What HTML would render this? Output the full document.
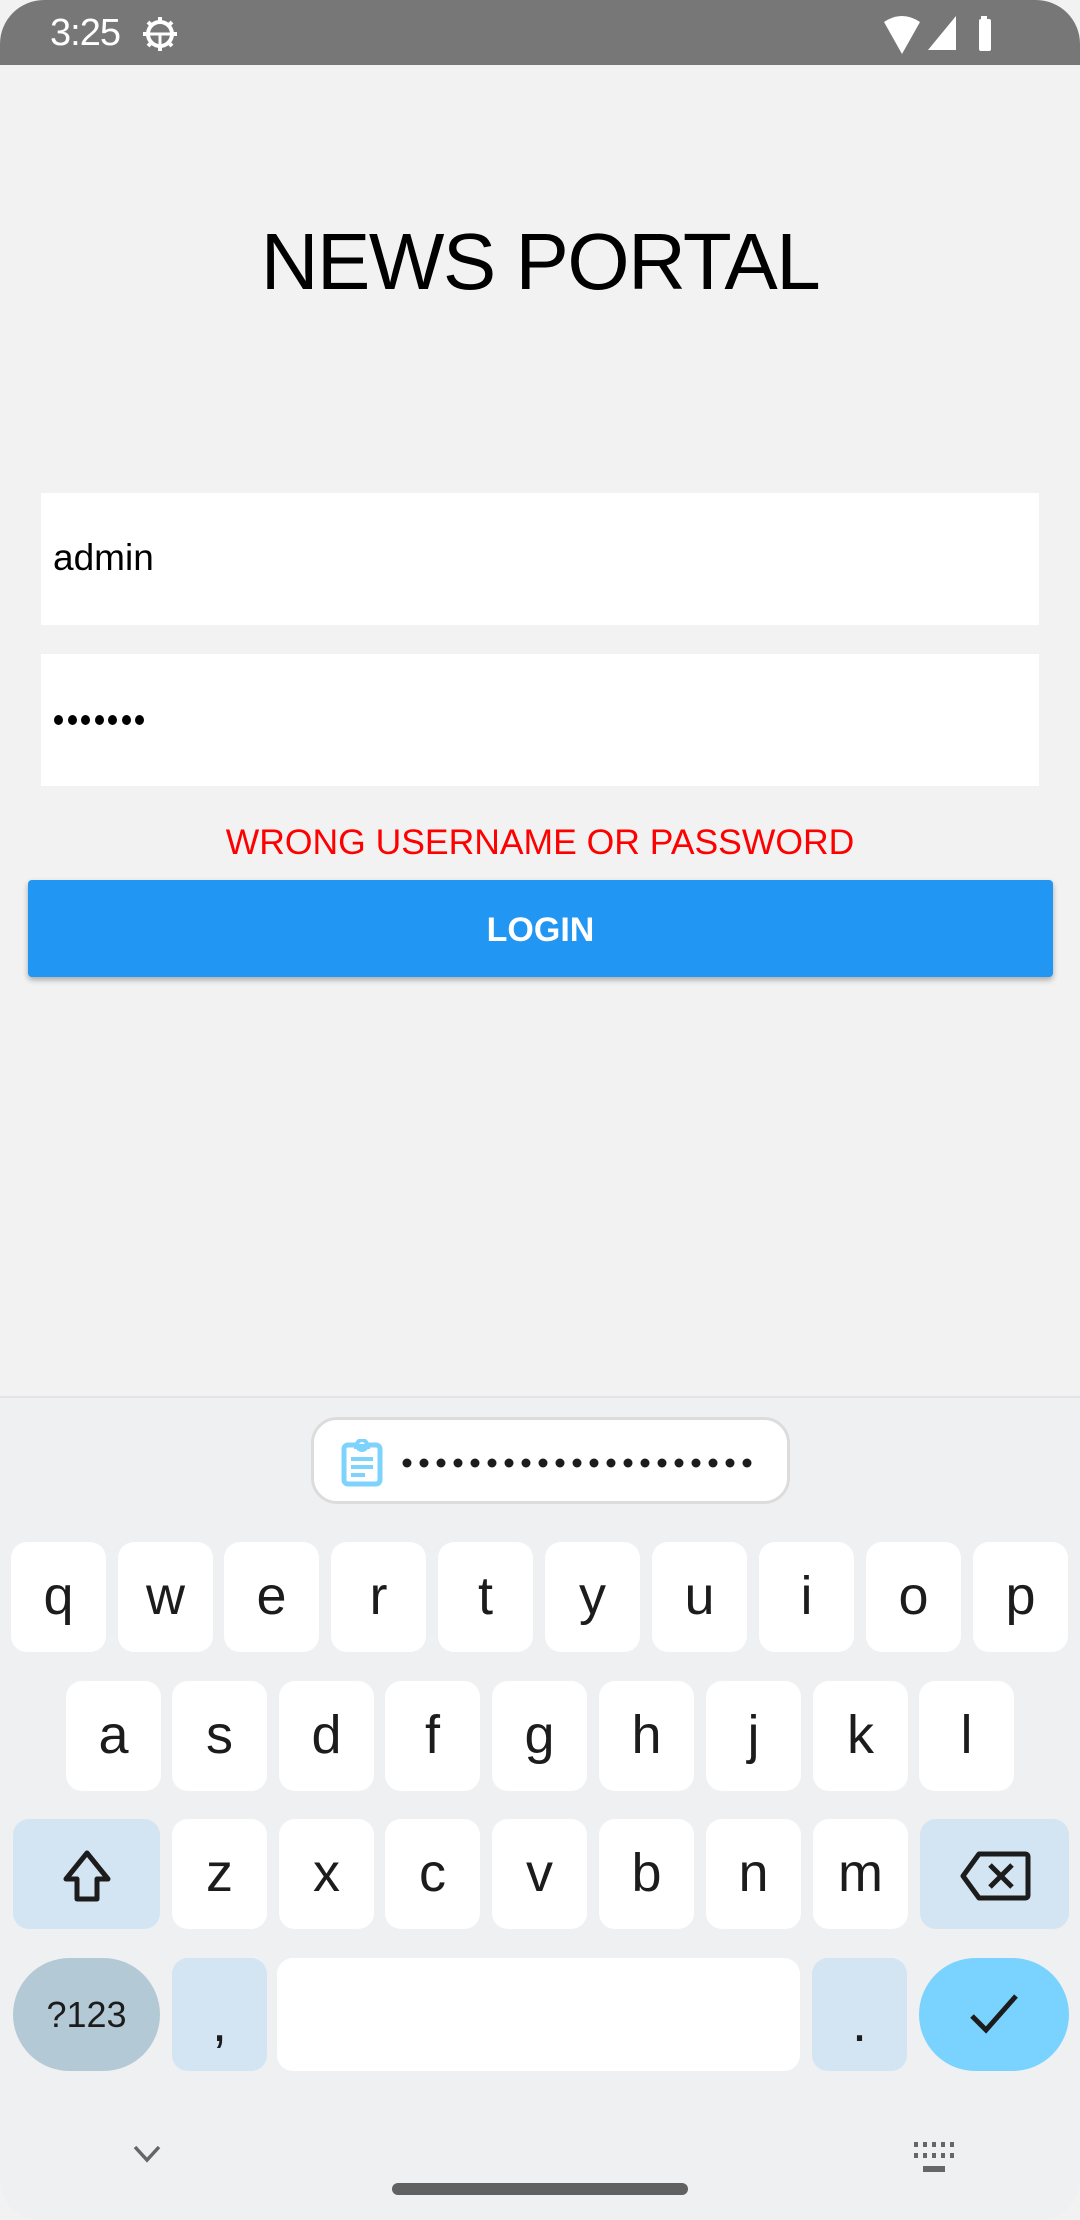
<!DOCTYPE html>
<html><head><meta charset="utf-8">
<style>
*{margin:0;padding:0;box-sizing:border-box}
body{width:1080px;height:2220px;background:#f2f2f2;font-family:"Liberation Sans",sans-serif;position:relative;overflow:hidden}
.a{position:absolute}
.sb{left:0;top:0;width:1080px;height:65px;background:#777;border-radius:44px 44px 0 0;color:#fff}
.in{background:#fff;left:41px;width:998px;height:132px}
.kb{left:0;top:1396px;width:1080px;height:824px;background:#eff0f2;border-top:2px solid #e4e4e6;border-radius:0 0 40px 40px}
.k{position:absolute;background:#fff;border-radius:16px;width:95px;height:110px;font-size:54px;color:#1c1c1c;text-align:center;line-height:108px}
.m{background:#d3e4f3}
.d{display:inline-block;border-radius:50%;background:#000}
</style></head><body>
<div class="a sb">
  <div class="a" style="left:50px;top:12px;font-size:38px;letter-spacing:-1px">3:25</div>
  <svg class="a" style="left:140px;top:14px" width="40" height="40" viewBox="0 0 40 40"><circle cx="20" cy="20" r="12" fill="none" stroke="#fff" stroke-width="4"/><g stroke="#fff" stroke-width="4"><line x1="20" y1="3" x2="20" y2="9"/><line x1="20" y1="31" x2="20" y2="37"/><line x1="3" y1="20" x2="9" y2="20"/><line x1="31" y1="20" x2="37" y2="20"/><line x1="8" y1="8" x2="12" y2="12"/><line x1="28" y1="28" x2="32" y2="32"/><line x1="8" y1="32" x2="12" y2="28"/><line x1="28" y1="12" x2="32" y2="8"/></g><line x1="9" y1="20" x2="31" y2="20" stroke="#fff" stroke-width="3"/><line x1="20" y1="20" x2="20" y2="32" stroke="#fff" stroke-width="3"/></svg>
  <svg class="a" style="left:880px;top:14px" width="130" height="40" viewBox="0 0 130 40"><path d="M4 8 Q22 -4 40 8 L22 40 Z" fill="#fff"/><path d="M48 36 L76 2 L76 36 Z" fill="#fff"/><rect x="101" y="2" width="6" height="4" fill="#fff"/><rect x="99" y="5" width="12" height="32" rx="2" fill="#fff"/></svg>
</div>
<div class="a" style="left:0;width:1080px;top:216px;text-align:center;font-size:80px;color:#000;letter-spacing:-1.5px">NEWS PORTAL</div>
<div class="a in" style="top:493px"><div class="a" style="left:12px;top:44px;font-size:37px;color:#000">admin</div></div>
<div class="a in" style="top:654px"><div class="a" style="left:13px;top:61px;height:10px;line-height:0;font-size:0"><span class="d" style="width:9px;height:10px;margin-right:4.5px"></span><span class="d" style="width:9px;height:10px;margin-right:4.5px"></span><span class="d" style="width:9px;height:10px;margin-right:4.5px"></span><span class="d" style="width:9px;height:10px;margin-right:4.5px"></span><span class="d" style="width:9px;height:10px;margin-right:4.5px"></span><span class="d" style="width:9px;height:10px;margin-right:4.5px"></span><span class="d" style="width:9px;height:10px"></span></div></div>
<div class="a" style="left:0;width:1080px;top:822px;text-align:center;font-size:35.5px;color:#f00">WRONG USERNAME OR PASSWORD</div>
<div class="a" style="left:28px;top:880px;width:1025px;height:97px;background:#2196f3;border-radius:4px;box-shadow:0 3px 6px rgba(0,0,0,.3);color:#fff;font-size:34px;font-weight:bold;text-align:center;line-height:100px">LOGIN</div>

<div class="a kb">
 <div class="a" style="left:311px;top:19px;width:479px;height:87px;background:#fff;border:3px solid #dcdcdc;border-radius:26px">
  <svg class="a" style="left:27px;top:19px" width="42" height="48" viewBox="0 0 42 48"><rect x="3" y="6" width="36" height="39" rx="4" fill="none" stroke="#7dd3fc" stroke-width="5"/><circle cx="21" cy="6" r="5" fill="#fff" stroke="#7dd3fc" stroke-width="4"/><rect x="13" y="5" width="16" height="5" fill="#7dd3fc"/><rect x="10" y="18" width="22" height="4" fill="#7dd3fc"/><rect x="10" y="26" width="22" height="4" fill="#7dd3fc"/><rect x="10" y="34" width="14" height="4" fill="#7dd3fc"/></svg>
  <svg class="a" style="left:88px;top:37px" width="360" height="14" viewBox="0 0 360 14"><g fill="#1c1c1c">
   <circle cx="5" cy="6" r="4.5"/><circle cx="22" cy="6" r="4.5"/><circle cx="39" cy="6" r="4.5"/><circle cx="56" cy="6" r="4.5"/><circle cx="73" cy="6" r="4.5"/><circle cx="90" cy="6" r="4.5"/><circle cx="107" cy="6" r="4.5"/><circle cx="124" cy="6" r="4.5"/><circle cx="141" cy="6" r="4.5"/><circle cx="158" cy="6" r="4.5"/><circle cx="175" cy="6" r="4.5"/><circle cx="192" cy="6" r="4.5"/><circle cx="209" cy="6" r="4.5"/><circle cx="226" cy="6" r="4.5"/><circle cx="243" cy="6" r="4.5"/><circle cx="260" cy="6" r="4.5"/><circle cx="277" cy="6" r="4.5"/><circle cx="294" cy="6" r="4.5"/><circle cx="311" cy="6" r="4.5"/><circle cx="328" cy="6" r="4.5"/><circle cx="345" cy="6" r="4.5"/></g></svg>
 </div>
 <div class="k" style="left:11px;top:144px">q</div><div class="k" style="left:118px;top:144px">w</div><div class="k" style="left:224px;top:144px">e</div><div class="k" style="left:331px;top:144px">r</div><div class="k" style="left:438px;top:144px">t</div><div class="k" style="left:545px;top:144px">y</div><div class="k" style="left:652px;top:144px">u</div><div class="k" style="left:759px;top:144px">i</div><div class="k" style="left:866px;top:144px">o</div><div class="k" style="left:973px;top:144px">p</div>
 <div class="k" style="left:66px;top:283px">a</div><div class="k" style="left:172px;top:283px">s</div><div class="k" style="left:279px;top:283px">d</div><div class="k" style="left:385px;top:283px">f</div><div class="k" style="left:492px;top:283px">g</div><div class="k" style="left:599px;top:283px">h</div><div class="k" style="left:706px;top:283px">j</div><div class="k" style="left:813px;top:283px">k</div><div class="k" style="left:919px;top:283px">l</div>
 <div class="k m" style="left:13px;top:421px;width:147px"><svg style="margin-top:30px" width="54" height="54" viewBox="0 0 54 54"><path d="M27 4 L48 30 H37 V50 H17 V30 H6 Z" fill="none" stroke="#1c1c1c" stroke-width="5" stroke-linejoin="round"/></svg></div>
 <div class="k" style="left:172px;top:421px">z</div><div class="k" style="left:279px;top:421px">x</div><div class="k" style="left:385px;top:421px">c</div><div class="k" style="left:492px;top:421px">v</div><div class="k" style="left:599px;top:421px">b</div><div class="k" style="left:706px;top:421px">n</div><div class="k" style="left:813px;top:421px">m</div>
 <div class="k m" style="left:920px;top:421px;width:149px"><svg style="margin-top:32px" width="72" height="50" viewBox="0 0 72 50"><path d="M20 3 H66 Q69 3 69 6 V44 Q69 47 66 47 H20 L4 25 Z" fill="none" stroke="#1c1c1c" stroke-width="5" stroke-linejoin="round"/><path d="M31 14 L53 36 M53 14 L31 36" stroke="#1c1c1c" stroke-width="5"/></svg></div>
 <div class="k" style="left:13px;top:560px;width:147px;height:113px;border-radius:57px;background:#b3cad6;font-size:36px;line-height:113px">?123</div>
 <div class="k m" style="left:172px;top:560px;height:113px;line-height:130px">,</div>
 <div class="k" style="left:277px;top:560px;width:523px;height:113px"></div>
 <div class="k m" style="left:812px;top:560px;height:113px;line-height:130px">.</div>
 <div class="k" style="left:919px;top:560px;width:150px;height:113px;border-radius:57px;background:#7ad3ff"><svg style="margin-top:34px" width="50" height="44" viewBox="0 0 50 44"><path d="M3 24 L17 38 L47 4" fill="none" stroke="#1c1c1c" stroke-width="5"/></svg></div>
 <svg class="a" style="left:132px;top:746px" width="30" height="20" viewBox="0 0 30 20"><path d="M3 3 L15 16 L27 3" fill="none" stroke="#666" stroke-width="3.5"/></svg>
 <svg class="a" style="left:912px;top:742px" width="46" height="36" viewBox="0 0 46 36"><g fill="#666"><rect x="2" y="2" width="4" height="5"/><rect x="11" y="2" width="4" height="5"/><rect x="20" y="2" width="4" height="5"/><rect x="29" y="2" width="4" height="5"/><rect x="38" y="2" width="4" height="5"/><rect x="2" y="13" width="4" height="5"/><rect x="11" y="13" width="4" height="5"/><rect x="20" y="13" width="4" height="5"/><rect x="29" y="13" width="4" height="5"/><rect x="38" y="13" width="4" height="5"/><rect x="11" y="26" width="22" height="6"/></g></svg>
 <div class="a" style="left:392px;top:785px;width:296px;height:12px;border-radius:6px;background:#616161"></div>
</div>
</body></html>
